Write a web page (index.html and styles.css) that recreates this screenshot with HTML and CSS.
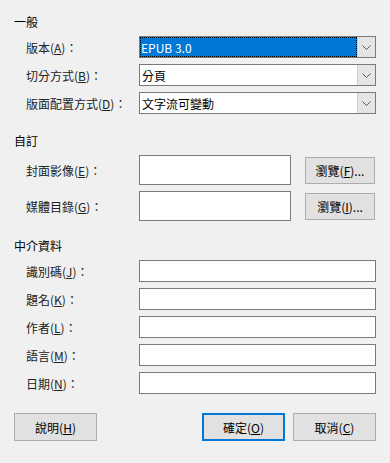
FILE: index.html
```html
<!DOCTYPE html>
<html lang="zh-Hant">
<head>
  <meta charset="UTF-8" />
  <title>EPUB 匯出</title>
  <link rel="stylesheet" href="styles.css">
</head>
<body>
<div class="dialog">
  <div class="grupo">
    <div class="titulo">一般</div>
    <div class="linhas">
      <div class="linha">
        <span class="rotulo">版本(<u>A</u>)：</span>
        <div class="combo ativo">
          <span class="valor"><span class="foco">EPUB 3.0</span></span>
          <span class="seta"><svg width="9" height="5" viewBox="0 0 9 5"><path d="M0.5 0.5 L4.5 4.5 L8.5 0.5" fill="none" stroke="#555" stroke-width="1"/></svg></span>
        </div>
      </div>
      <div class="linha">
        <span class="rotulo">切分方式(<u>B</u>)：</span>
        <div class="combo">
          <span class="valor">分頁</span>
          <span class="seta"><svg width="9" height="5" viewBox="0 0 9 5"><path d="M0.5 0.5 L4.5 4.5 L8.5 0.5" fill="none" stroke="#555" stroke-width="1"/></svg></span>
        </div>
      </div>
      <div class="linha">
        <span class="rotulo">版面配置方式(<u>D</u>)：</span>
        <div class="combo">
          <span class="valor">文字流可變動</span>
          <span class="seta"><svg width="9" height="5" viewBox="0 0 9 5"><path d="M0.5 0.5 L4.5 4.5 L8.5 0.5" fill="none" stroke="#555" stroke-width="1"/></svg></span>
        </div>
      </div>
    </div>
  </div>

  <div class="grupo personalizado">
    <div class="titulo">自訂</div>
    <div class="linhas">
      <div class="linha alta">
        <span class="rotulo">封面影像(<u>E</u>)：</span>
        <div class="campo curto"></div>
        <button class="botao navegar">瀏覽(<u>F</u>)...</button>
      </div>
      <div class="linha alta">
        <span class="rotulo">媒體目錄(<u>G</u>)：</span>
        <div class="campo curto"></div>
        <button class="botao navegar">瀏覽(<u>I</u>)...</button>
      </div>
    </div>
  </div>

  <div class="grupo">
    <div class="titulo">中介資料</div>
    <div class="linhas">
      <div class="linha"><span class="rotulo">識別碼(<u>J</u>)：</span><div class="campo"></div></div>
      <div class="linha"><span class="rotulo">題名(<u>K</u>)：</span><div class="campo"></div></div>
      <div class="linha"><span class="rotulo">作者(<u>L</u>)：</span><div class="campo"></div></div>
      <div class="linha"><span class="rotulo">語言(<u>M</u>)：</span><div class="campo"></div></div>
      <div class="linha"><span class="rotulo">日期(<u>N</u>)：</span><div class="campo"></div></div>
    </div>
  </div>

  <div class="rodape">
    <button class="botao">說明(<u>H</u>)</button>
    <div class="direita">
      <button class="botao padrao">確定(<u>O</u>)</button>
      <button class="botao">取消(<u>C</u>)</button>
    </div>
  </div>
</div>
</body>
</html>
```

FILE: styles.css
```css
body {
  margin: 0;
  background: #f0f0f0;
  font-family: "Noto Sans CJK TC", "Noto Sans", sans-serif;
  font-size: 12px;
  color: #000;
}
.dialog {
  padding: 14px 14px 0 14px;
}
.grupo {
  margin-bottom: 19px;
}
.grupo.personalizado {
  margin-bottom: 17px;
}
.titulo {
  height: 16px;
  line-height: 16px;
}
.linhas {
  display: flex;
  flex-direction: column;
  gap: 6px;
  padding: 6px 0 0 12px;
}
.linha {
  display: flex;
  align-items: center;
  height: 22px;
}
.linha.alta {
  height: 30px;
}
.rotulo {
  width: 113px;
  flex-shrink: 0;
  color: #222;
}
.combo {
  flex: 1;
  height: 22px;
  box-sizing: border-box;
  border: 1px solid #7a7a7a;
  background: #fff;
  display: flex;
}
.combo .valor {
  flex: 1;
  display: flex;
  align-items: center;
  padding-left: 2px;
}
.combo.ativo .valor {
  background: #0078d7;
  color: #fff;
  outline: 1px dotted #000;
  outline-offset: -1px;
  padding-left: 1px;
}
.combo .seta {
  width: 17px;
  background: #e5e5e5;
  border-left: 1px solid #cfcfcf;
  display: flex;
  align-items: center;
  justify-content: center;
}
.campo {
  flex: 1;
  height: 22px;
  box-sizing: border-box;
  border: 1px solid #7a7a7a;
  background: #fff;
}
.campo.curto {
  flex: 0 0 152px;
  height: 30px;
}
.botao {
  font-family: inherit;
  font-size: 12px;
  color: #000;
  background: #e1e1e1;
  border: 1px solid #adadad;
  box-sizing: border-box;
  width: 83px;
  height: 28px;
  padding: 0;
}
.navegar {
  width: 70px;
  height: 27px;
  margin-left: 14px;
}
.rodape {
  display: flex;
  justify-content: space-between;
  margin-top: 6px;
}
.direita {
  display: flex;
  gap: 8px;
}
.padrao {
  border: 2px solid #0078d7;
}
```
